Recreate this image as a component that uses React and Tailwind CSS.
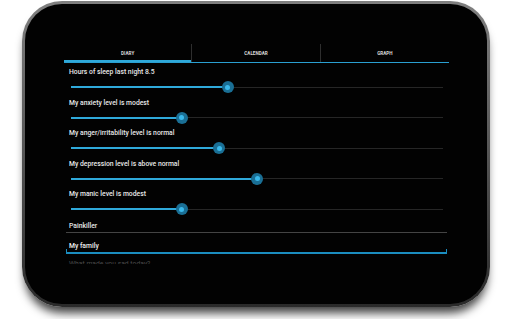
const tabs = ['DIARY', 'CALENDAR', 'GRAPH'];

const sliders = [
  { label: 'Hours of sleep last night 8.5', value: 42.2 },
  { label: 'My anxiety level is modest', value: 29.8 },
  { label: 'My anger/irritability level is normal', value: 39.8 },
  { label: 'My depression level is above normal', value: 50 },
  { label: 'My manic level is modest', value: 29.8 },
];

function Slider({ label, value }) {
  return (
    <div className="h-[30.5px]">
      <div className="h-[14px] pl-[5px] text-[6.8px] leading-[14px] text-[#e8e8e8] font-medium">{label}</div>
      <div className="relative h-[16.5px] ml-[7px] mr-[6px] flex items-center">
        <div className="h-[1px] w-full bg-[#262626]" />
        <div className="absolute left-0 h-[2px] bg-[#2fa9da]" style={{ width: `${value}%` }} />
        <div
          className="absolute w-[12px] h-[12px] -ml-[6px] rounded-full bg-[#1a6f95] flex items-center justify-center"
          style={{ left: `${value}%` }}
        >
          <div className="w-[5px] h-[5px] rounded-full bg-[#3ab8ea]" />
        </div>
      </div>
    </div>
  );
}

export default function App() {
  return (
    <div className="w-[512px] h-[319px] bg-white pl-[22px] pt-[1px] font-['Roboto','Liberation_Sans',sans-serif]">
      <div className="w-[468px] h-[306px] rounded-[40px] p-[3px] bg-gradient-to-b from-[#808080] via-[#555555] to-[#2a2a2a] shadow-[0_9px_10px_-3px_rgba(0,0,0,0.75)]">
        <div className="w-full h-full rounded-[37px] bg-[#020202] pl-[39px] pt-[40px]">
          <div className="w-[385px]">
            <div className="grid grid-cols-3 border-b border-[#2a9fd0]">
              {tabs.map((t, i) => (
                <div
                  key={t}
                  className={`relative h-[18px] flex items-center justify-center text-[4.6px] font-bold text-[#d8d8d8] ${i < 2 ? 'border-r border-[#2e2e2e]' : ''}`}
                >
                  <span className="mt-[2px]">{t}</span>
                  {i === 0 && <div className="absolute left-0 right-0 bottom-0 h-[2px] bg-[#2fa9da]" />}
                </div>
              ))}
            </div>
            <div className="h-[201px] overflow-hidden pt-[2px]">
              {sliders.map((s) => (
                <Slider key={s.label} {...s} />
              ))}
              <div className="mx-[2px] pt-[2px] border-b border-[#444444]">
                <div className="h-[12px] pl-[3px] text-[6.8px] leading-[12px] text-[#e8e8e8] font-medium">Painkiller</div>
              </div>
              <div className="relative mx-[2px] pt-[7px] border-b-2 border-[#1b8dbf]">
                <div className="h-[12px] pl-[3px] text-[6.8px] leading-[12px] text-[#efefef] font-medium">My family</div>
                <div className="absolute left-0 bottom-0 w-[1px] h-[3px] bg-[#1b8dbf]" />
                <div className="absolute right-0 bottom-0 w-[1px] h-[3px] bg-[#1b8dbf]" />
              </div>
              <div className="mx-[2px] pt-[4px]">
                <div className="h-[12px] pl-[3px] text-[6.8px] leading-[12px] text-[#4a4a4a]">What made you sad today?</div>
              </div>
            </div>
          </div>
        </div>
      </div>
    </div>
  );
}
